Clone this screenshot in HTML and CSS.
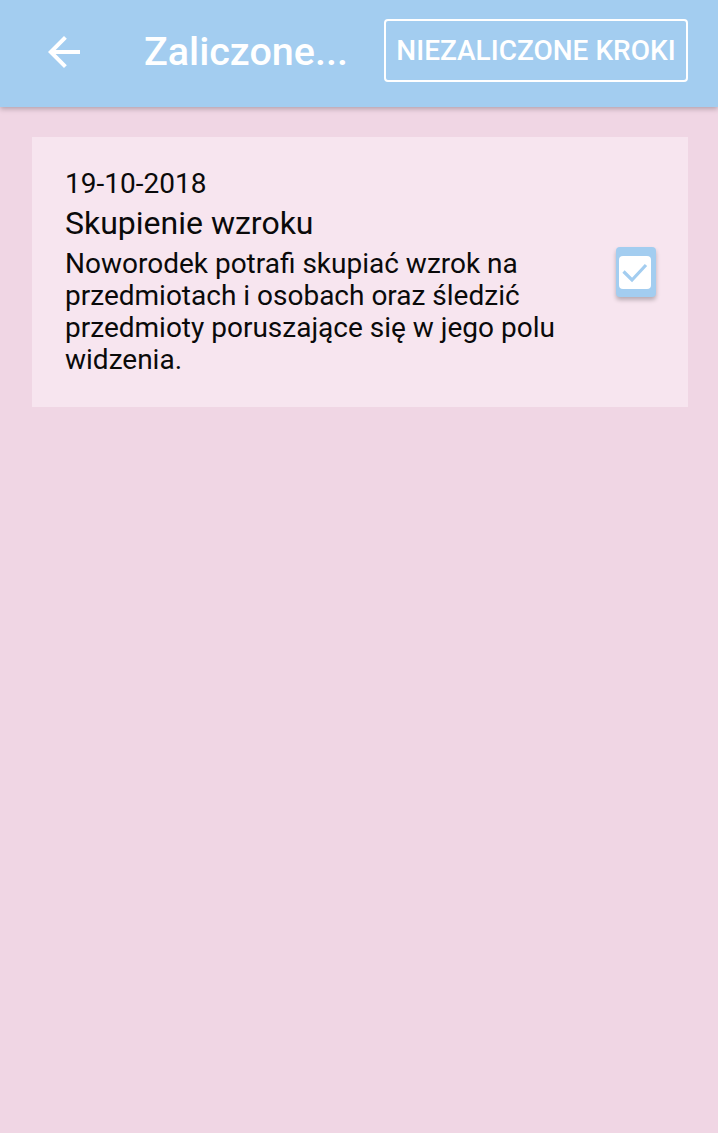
FILE: index.html
```html
<!DOCTYPE html>
<html lang="pl">
<head>
<meta charset="utf-8">
<link rel="stylesheet" href="styles.css">
</head>
<body>
<header class="toolbar">
  <button class="back" aria-label="Wstecz">
    <svg viewBox="0 0 24 24" width="48" height="48"><path fill="#fff" d="M20 11H7.83l5.59-5.59L12 4l-8 8 8 8 1.41-1.41L7.83 13H20v-2z"/></svg>
  </button>
  <h1 class="title">Zaliczone...</h1>
  <button class="action">NIEZALICZONE KROKI</button>
</header>
<main class="content">
  <section class="card">
    <div class="card-text">
      <div class="date">19-10-2018</div>
      <div class="name">Skupienie wzroku</div>
      <p class="desc">Noworodek potrafi skupiać wzrok na przedmiotach i osobach oraz śledzić przedmioty poruszające się w jego polu widzenia.</p>
    </div>
    <div class="check">
      <svg viewBox="0 0 32 33" width="32" height="33">
        <rect x="0" y="0" width="32" height="33" rx="4" fill="#fff"/>
        <path d="M4.5 15.5 L13 24 L27 9" fill="none" stroke="#a3cdf0" stroke-width="3.2"/>
      </svg>
    </div>
  </section>
</main>
</body>
</html>
```
FILE: styles.css
```css
* { box-sizing: border-box; }
html, body { margin: 0; padding: 0; }
body {
  width: 718px;
  height: 1133px;
  background: #f0d6e4;
  font-family: Roboto, "Noto Sans", sans-serif;
  overflow: hidden;
}
.toolbar {
  height: 107px;
  background: #a3cdf0;
  display: flex;
  align-items: center;
  box-shadow: 0 2px 5px rgba(0,0,0,0.25);
  position: relative;
  z-index: 1;
}
.back {
  width: 48px;
  height: 48px;
  margin-left: 40px;
  margin-bottom: 3px;
  padding: 0;
  border: 0;
  background: none;
  display: flex;
}
.title {
  margin: 0 0 4px 56px;
  color: #fff;
  font-size: 39.5px;
  font-weight: 500;
  flex: 1;
}
.action {
  margin-right: 30px;
  margin-bottom: 6px;
  width: 304px;
  height: 63px;
  background: transparent;
  border: 2px solid #fff;
  border-radius: 4px;
  color: #fff;
  font-family: Roboto, sans-serif;
  font-size: 28px;
  font-weight: 500;
  padding: 0;
}
.content {
  padding: 30px 30px 0 32px;
}
.card {
  background: #f7e5ef;
  width: 656px;
  display: flex;
  align-items: center;
  padding: 30px 32px 31px 33px;
}
.card-text {
  flex: 1;
  color: #0a0a0a;
}
.date {
  font-size: 28px;
  line-height: 33px;
}
.name {
  font-size: 32px;
  line-height: 38px;
  margin-top: 4px;
}
.desc {
  margin: 6px 0 0;
  font-size: 28px;
  line-height: 32px;
  width: 540px;
}
.check {
  width: 40px;
  height: 50px;
  background: #a3cdf0;
  border-radius: 4px;
  box-shadow: 0 3px 4px rgba(0,0,0,0.25);
  padding: 9px 0 0 3px;
  display: flex;
  align-items: flex-start;
}
.check svg { display: block; }
```
